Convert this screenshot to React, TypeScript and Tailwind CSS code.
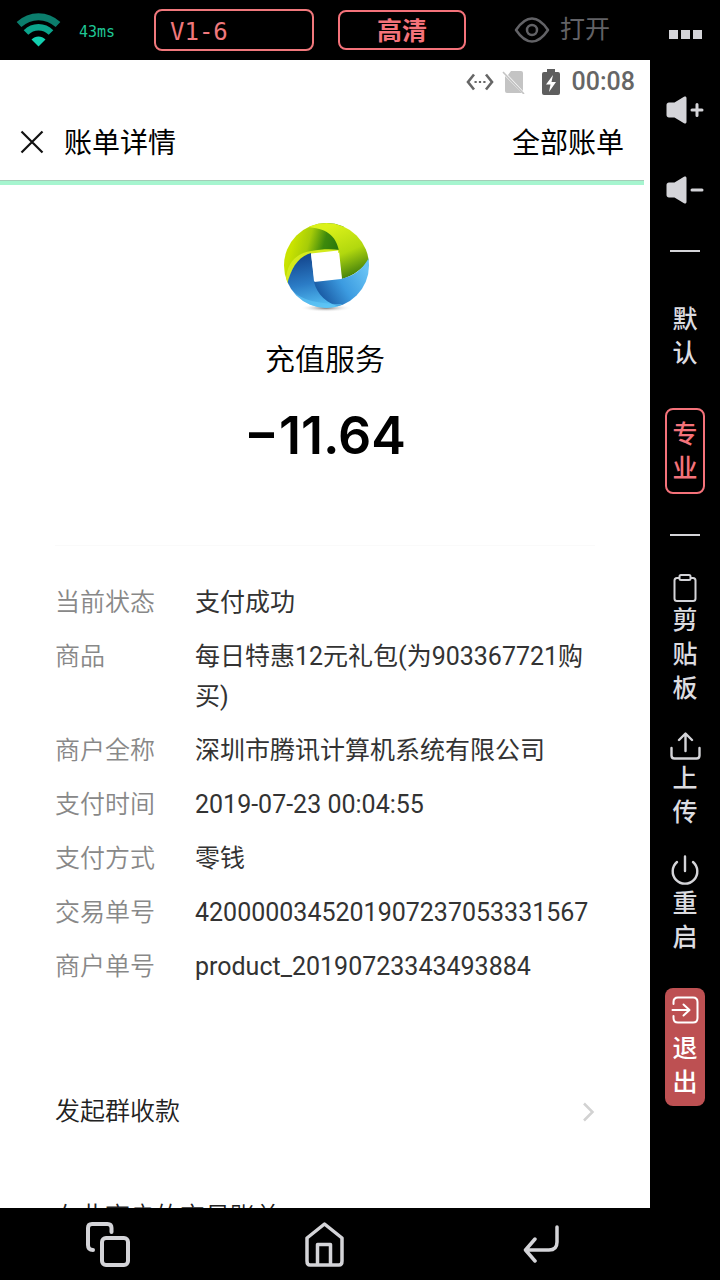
import type { ReactNode } from 'react';

type Detail = { label: string; value: string };

const DETAILS: Detail[] = [
  { label: '当前状态', value: '支付成功' },
  { label: '商品', value: '每日特惠12元礼包(为903367721购买)' },
  { label: '商户全称', value: '深圳市腾讯计算机系统有限公司' },
  { label: '支付时间', value: '2019-07-23 00:04:55' },
  { label: '支付方式', value: '零钱' },
  { label: '交易单号', value: '4200000345201907237053331567' },
  { label: '商户单号', value: 'product_20190723343493884' },
];

const WifiIcon = () => (
  <svg width="45" height="34" viewBox="0 0 45 34" fill="none">
    <path d="M3 11.500C14.500 1 30.500 1 42 11.500" stroke="#0b7d6c" strokeWidth="7" />
    <path d="M10 19.500C17 12.500 28 12.500 35 19.500" stroke="#0ba58c" strokeWidth="6.500" />
    <path d="M15.500 26.500C19.500 22.500 25.500 22.500 29.500 26.500L22.500 33.500Z" fill="#13d0b0" />
  </svg>
);

const EyeIcon = () => (
  <svg width="36" height="28" viewBox="0 0 36 28" fill="none" stroke="#626266" strokeWidth="2.500">
    <path d="M2 14C8 5 13 2.500 18 2.500S28 5 34 14C28 23 23 25.500 18 25.500S8 23 2 14Z" strokeLinejoin="round" />
    <circle cx="18" cy="14" r="5" />
  </svg>
);

const VolumeIcon = ({ up = false }: { up?: boolean }) => (
  <svg width="38" height="28" viewBox="0 0 38 28" fill="#d4d4d8">
    <path d="M3 6.500H8.500L18 .8C19.500 0 20.500.8 20.500 2V26C20.500 27.200 19.500 28 18 27.200L8.500 21.500H3C1.500 21.500.5 20.500.5 19V9C.5 7.500 1.500 6.500 3 6.500Z" />
    <path d={up ? 'M26 14H36M31 8.500V19.500' : 'M26 14H36'} stroke="#d4d4d8" strokeWidth="3" strokeLinecap="round" />
  </svg>
);

const ClipboardIcon = () => (
  <svg width="24" height="28" viewBox="0 0 24 28" fill="none" stroke="#d4d4d8" strokeWidth="2" strokeLinejoin="round">
    <path d="M6 4H4Q1.500 4 1.500 6.500V24.500Q1.500 27 4 27H20Q22.500 27 22.500 24.500V6.500Q22.500 4 20 4H18" />
    <path d="M8 1H16Q17.500 1 17.500 2.500V4.500Q17.500 6 16 6H8Q6.500 6 6.500 4.500V2.500Q6.500 1 8 1Z" />
  </svg>
);

const UploadIcon = () => (
  <svg width="31" height="28" viewBox="0 0 31 28" fill="none" stroke="#d4d4d8" strokeWidth="2.400" strokeLinecap="round" strokeLinejoin="round">
    <path d="M15.500 19V2M9 8L15.500 1.500L22 8" />
    <path d="M1.500 16V23.500Q1.500 26.500 4.500 26.500H26.500Q29.500 26.500 29.500 23.500V16" />
  </svg>
);

const PowerIcon = () => (
  <svg width="28" height="30" viewBox="0 0 28 30" fill="none" stroke="#d4d4d8" strokeWidth="2.400" strokeLinecap="round">
    <path d="M14 1.500V16M6 7A12.300 12.300 0 1 0 22 7" />
  </svg>
);

const ExitIcon = () => (
  <svg width="28" height="28" viewBox="0 0 28 28" fill="none" stroke="#fff" strokeWidth="2" strokeLinecap="round" strokeLinejoin="round">
    <path d="M2.500 8V6Q2.500 1.500 7 1.500H22Q26.500 1.500 26.500 6V22Q26.500 26.500 22 26.500H7Q2.500 26.500 2.500 22V20" />
    <path d="M1.500 14H18M12.500 8.500L18.500 14L12.500 19.500" />
  </svg>
);

const ServiceLogo = () => (
  <svg width="90" height="90" viewBox="10 12 90 90" role="img" aria-label="充值服务">
    <defs>
      <clipPath id="disc">
        <circle cx="56.500" cy="55.500" r="42.500" />
      </clipPath>
      <linearGradient id="limeLeft" gradientUnits="userSpaceOnUse" x1="24" y1="28" x2="66" y2="40">
        <stop offset="0" stopColor="#c9e300" />
        <stop offset=".35" stopColor="#a6cc08" />
        <stop offset=".7" stopColor="#3d8a0c" />
        <stop offset="1" stopColor="#2c780c" />
      </linearGradient>
      <linearGradient id="limeRight" gradientUnits="userSpaceOnUse" x1="62" y1="15" x2="84" y2="66">
        <stop offset="0" stopColor="#dcf21a" />
        <stop offset=".55" stopColor="#b2d80e" />
        <stop offset="1" stopColor="#417f0c" />
      </linearGradient>
      <linearGradient id="blueRight" gradientUnits="userSpaceOnUse" x1="94" y1="55" x2="50" y2="82">
        <stop offset="0" stopColor="#67c3f5" />
        <stop offset=".55" stopColor="#3c9be0" />
        <stop offset="1" stopColor="#1c5fa8" />
      </linearGradient>
      <linearGradient id="blueLeft" gradientUnits="userSpaceOnUse" x1="36" y1="48" x2="46" y2="98">
        <stop offset="0" stopColor="#164c94" />
        <stop offset=".5" stopColor="#2b7cc6" />
        <stop offset="1" stopColor="#55c0f4" />
      </linearGradient>
      <radialGradient id="shade">
        <stop offset="0" stopColor="#777" />
        <stop offset="1" stopColor="#fff" stopOpacity="0" />
      </radialGradient>
    </defs>
    <ellipse cx="56" cy="98" rx="26" ry="4" fill="url(#shade)" />
    <g clipPath="url(#disc)">
      <path d="M10 76V8H75L70 42L41 44C30 46 20 58 17 76Z" fill="url(#limeLeft)" />
      <path d="M16 74C15 54 26 43 41 41C52 39 61 39 70 40L69 43L41 44C28 48 20 58 18 76Z" fill="#d3ea1c" />
      <path d="M36 17C56 18 66 25 69 41L72 69C86 65 96 56 102 45V8H45Z" fill="url(#limeRight)" />
      <path d="M17 75C21 58 28 47 41 43L44 71L78 104H10Z" fill="url(#blueLeft)" />
      <path d="M101 44C93 60 84 66 71 69L44 72C47 84 56 94 74 98L104 90Z" fill="url(#blueRight)" />
      <path d="M16 72C24 88 42 94 72 94L66 102H26Z" fill="#62c8f6" opacity=".6" />
    </g>
    <path d="M41 43.500L68 40.500L71.500 68L44.500 71Z" fill="#fff" />
  </svg>
);

const StatusIcons = () => (
  <>
    <svg width="28" height="18" viewBox="0 0 28 18" fill="none" stroke="#666" strokeWidth="2.600">
      <path d="M8 1.500L2 9L8 16.500M20 1.500L26 9L20 16.500" />
      <path d="M8.500 9H10.700M12.900 9H15.100M17.300 9H19.500" strokeWidth="2.200" />
    </svg>
    <svg className="ml-2" width="24" height="24" viewBox="0 0 24 24">
      <path d="M9 1H19Q21 1 21 3V21L6 5ZM3 6L20 23H5Q3 23 3 21Z" fill="#c4c4c4" />
      <path d="M1 2L22 24" stroke="#c4c4c4" strokeWidth="1.600" />
    </svg>
    <svg className="ml-4" width="18" height="26" viewBox="0 0 18 26">
      <path d="M5 0H13V3H16Q18 3 18 5V24Q18 26 16 26H2Q0 26 0 24V5Q0 3 2 3H5Z" fill="#5e5e5e" />
      <path d="M11 6L4 15.500H8.500L7 23L14 13H9.500Z" fill="#fff" />
    </svg>
  </>
);

// Stacked caption used by the sidebar tools
const Stacked = ({ children }: { children: ReactNode }) => (
  <span className="block w-[25px] break-all text-[25px] leading-[34px] font-medium">{children}</span>
);

const Divider = () => <div className="h-[2px] w-[30px] bg-[#d4d4d8]" />;

const Sidebar = () => (
  <aside className="flex w-[70px] shrink-0 flex-col items-center pt-9 text-[#dcdce0]">
    <button aria-label="音量加"><VolumeIcon up /></button>
    <button aria-label="音量减" className="mt-[52px]"><VolumeIcon /></button>
    <div className="mt-[46px]"><Divider /></div>
    <button className="mt-[51px]"><Stacked>默认</Stacked></button>
    <button className="mt-[37px] flex w-10 justify-center rounded-lg border-2 border-[#f4727a] pt-2 pb-[6px] text-[#f4727a]">
      <Stacked>专业</Stacked>
    </button>
    <div className="mt-10"><Divider /></div>
    <button className="mt-[38px] flex flex-col items-center gap-[2px]">
      <ClipboardIcon />
      <Stacked>剪贴板</Stacked>
    </button>
    <button className="mt-[26px] flex flex-col items-center gap-[2px]">
      <UploadIcon />
      <Stacked>上传</Stacked>
    </button>
    <button className="mt-[25px] flex flex-col items-center gap-[2px]">
      <PowerIcon />
      <Stacked>重启</Stacked>
    </button>
    <button className="mt-[33px] flex w-10 flex-col items-center gap-2 rounded-lg bg-[#bd5052] pt-2 pb-[6px] text-white">
      <ExitIcon />
      <Stacked>退出</Stacked>
    </button>
  </aside>
);

const TopBar = () => (
  <header className="flex h-[60px] shrink-0 items-center pl-4">
    <WifiIcon />
    <span className="ml-[18px] w-[75px] pt-1 font-['DejaVu_Sans_Mono',monospace] text-[15px] text-[#1fc795]">43ms</span>
    <button className="h-[42px] w-40 rounded-lg border-2 border-[#f0787c] pt-1 pl-[14px] text-left font-['DejaVu_Sans_Mono',monospace] text-2xl leading-8 text-[#f0787c]">
      V1-6
    </button>
    <button className="ml-6 h-10 w-32 rounded-lg border-2 border-[#f4727a] pt-1 text-[25px] leading-8 font-bold text-[#f4727a]">
      高清
    </button>
    <button className="ml-12 flex items-center gap-[10px] text-[25px] text-[#626266]">
      <EyeIcon />
      打开
    </button>
    <button aria-label="更多" className="ml-auto flex w-[70px] justify-center gap-[3px] pt-2">
      <span className="size-[9px] bg-[#d4d4d8]" />
      <span className="size-[9px] bg-[#d4d4d8]" />
      <span className="size-[9px] bg-[#d4d4d8]" />
    </button>
  </header>
);

const BillScreen = () => (
  <main className="flex min-w-0 flex-1 flex-col overflow-hidden bg-white text-black">
    <div className="flex h-11 shrink-0 items-center justify-end pr-[15px]">
      <StatusIcons />
      <span className="ml-3 text-[25px] font-medium text-[#666]">00:08</span>
    </div>
    <div className="flex h-[76px] shrink-0 items-center pr-[26px] pl-5 text-[28px] leading-10">
      <button aria-label="关闭">
        <svg width="24" height="24" viewBox="0 0 24 24" stroke="#111" strokeWidth="2.200">
          <path d="M1.500 1.500L22.500 22.500M22.500 1.500L1.500 22.500" />
        </svg>
      </button>
      <h1 className="ml-5 pt-1">账单详情</h1>
      <button className="ml-auto pt-1">全部账单</button>
    </div>
    <div className="mr-[6px] h-[5px] shrink-0 border-t border-[#a5cdb8] bg-[#a6f5cf]" />

    <div className="flex flex-col items-center pt-[37px]">
      <ServiceLogo />
      <p className="mt-7 text-[30px] leading-10 font-[350]">充值服务</p>
      <p className="mt-6 font-[Inter,sans-serif] text-[52px] leading-[64px] font-semibold">−11.64</p>
    </div>

    <div className="mx-[55px] mt-[77px] border-t border-[#fafafa] pt-[37px] text-[25px] leading-10">
      <dl className="flex flex-col gap-[14px]">
        {DETAILS.map((item) => (
          <div key={item.label} className="flex">
            <dt className="w-[140px] shrink-0 font-[350] text-[#888]">{item.label}</dt>
            <dd className="flex-1 break-all text-[#333]">{item.value}</dd>
          </div>
        ))}
      </dl>
      <a href="#collect" className="mt-[105px] flex items-center justify-between font-[350] text-[#222]">
        发起群收款
        <svg width="13" height="20" viewBox="0 0 13 20" fill="none" stroke="#d2d2d2" strokeWidth="2.500">
          <path d="M2 1.500L10.500 10L2 18.500" />
        </svg>
      </a>
      <a href="#merchant" className="mt-[65px] block font-[350] text-[#222]">在此商户的交易账单</a>
    </div>
  </main>
);

const NavBar = () => (
  <nav className="grid h-[72px] shrink-0 grid-cols-3 items-center justify-items-center pr-[70px]">
    <button aria-label="最近任务">
      <svg width="46" height="46" viewBox="0 0 46 46" fill="none" stroke="#d4d4d8" strokeWidth="4" strokeLinecap="round">
        <path d="M26.500 11V7Q26.500 3 22.500 3H7Q3 3 3 7V24Q3 29 8 29" />
        <rect x="17" y="17" width="26" height="27" rx="4" />
      </svg>
    </button>
    <button aria-label="主页">
      <svg width="42" height="46" viewBox="0 0 42 46" fill="none" stroke="#d4d4d8" strokeWidth="3.500" strokeLinejoin="round">
        <path d="M3 17L20.500 3L38 17V40Q38 44 35 44H6Q3 44 3 40Z" />
        <path d="M13.500 44V23.500H26.500V44" />
      </svg>
    </button>
    <button aria-label="返回">
      <svg width="38" height="38" viewBox="0 0 38 38" fill="none" stroke="#d4d4d8" strokeWidth="3.500" strokeLinecap="round" strokeLinejoin="round">
        <path d="M34 2V17Q34 25 26 25H2.500M12 14L2.500 25L12 36" />
      </svg>
    </button>
  </nav>
);

const App = () => (
  <div className="flex h-screen flex-col bg-black font-[Roboto,'Noto_Sans_CJK_SC',sans-serif]">
    <TopBar />
    <div className="flex min-h-0 flex-1">
      <BillScreen />
      <Sidebar />
    </div>
    <NavBar />
  </div>
);

export default App;
